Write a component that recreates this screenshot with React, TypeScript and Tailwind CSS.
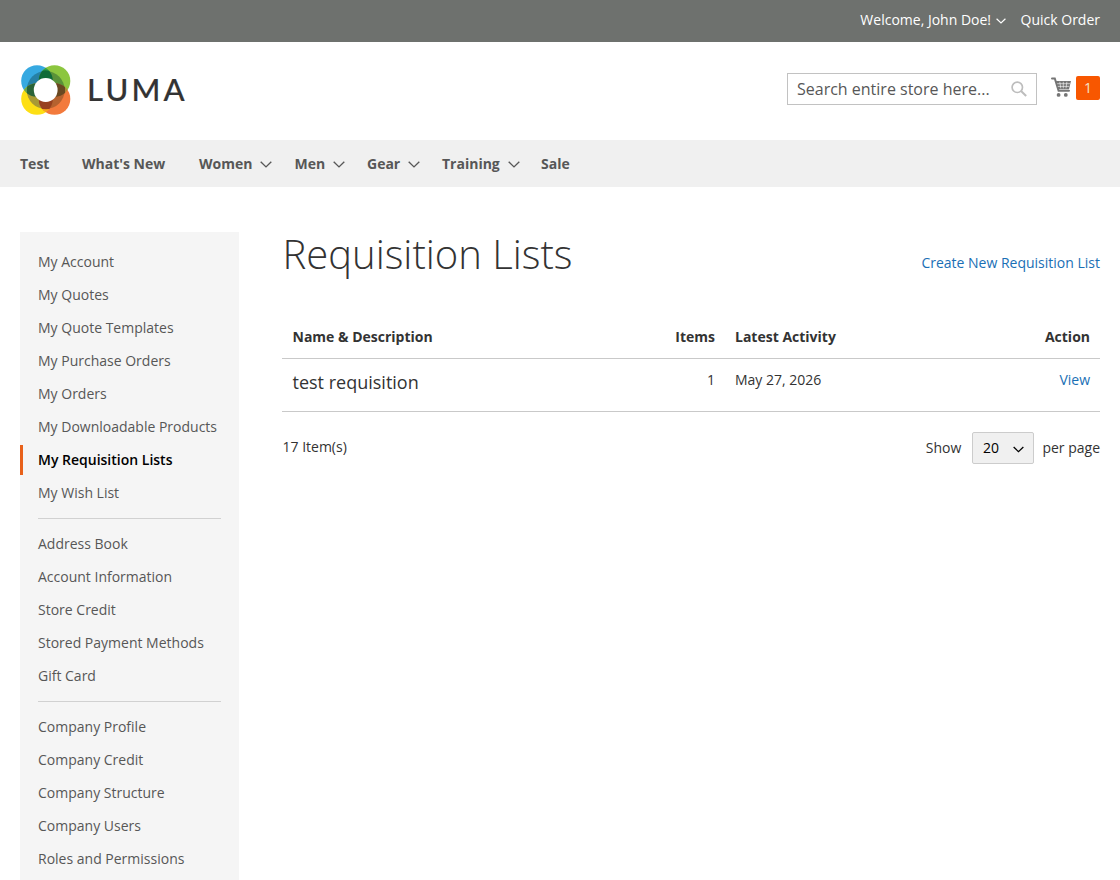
const navItems = [
  { label: "Test", hasMenu: false, width: "w-[62px]" },
  { label: "What's New", hasMenu: false, width: "w-[117px]" },
  { label: "Women", hasMenu: true, width: "w-[95.5px]" },
  { label: "Men", hasMenu: true, width: "w-[72.5px]" },
  { label: "Gear", hasMenu: true, width: "w-[75px]" },
  { label: "Training", hasMenu: true, width: "w-[99px]" },
  { label: "Sale", hasMenu: false, width: "w-[40px]" },
];

const sidebarGroups = [
  [
    "My Account",
    "My Quotes",
    "My Quote Templates",
    "My Purchase Orders",
    "My Orders",
    "My Downloadable Products",
    "My Requisition Lists",
    "My Wish List",
  ],
  [
    "Address Book",
    "Account Information",
    "Store Credit",
    "Stored Payment Methods",
    "Gift Card",
  ],
  [
    "Company Profile",
    "Company Credit",
    "Company Structure",
    "Company Users",
    "Roles and Permissions",
  ],
];

function Chevron({ className }: { className: string }) {
  return (
    <svg viewBox="0 0 12 7" className={className} fill="none">
      <path d="M.7.8 6 5.9 11.3.8" stroke="currentColor" strokeWidth="1.4" />
    </svg>
  );
}

function Logo() {
  return (
    <a href="#" className="flex items-center">
      <svg width="50" height="50" viewBox="0 0 50 50">
        <defs>
          <clipPath id="tl">
            <circle cx="16" cy="16" r="15.8" />
          </clipPath>
          <clipPath id="tr">
            <circle cx="33.5" cy="16" r="15.8" />
          </clipPath>
          <clipPath id="bl">
            <circle cx="16" cy="34" r="15.8" />
          </clipPath>
          <clipPath id="br">
            <circle cx="33.5" cy="34" r="15.8" />
          </clipPath>
        </defs>
        <circle cx="16" cy="16" r="15.8" fill="#36a9e1" />
        <circle cx="33.5" cy="16" r="15.8" fill="#8cc63f" />
        <circle cx="16" cy="34" r="15.8" fill="#fddf14" />
        <circle cx="33.5" cy="34" r="15.8" fill="#f37a3c" />
        <circle cx="33.5" cy="16" r="15.8" fill="#35a04a" clipPath="url(#tl)" />
        <circle cx="33.5" cy="34" r="15.8" fill="#f8a51b" clipPath="url(#bl)" />
        <circle cx="16" cy="34" r="15.8" fill="#6aa843" clipPath="url(#tl)" />
        <circle cx="33.5" cy="34" r="15.8" fill="#ae8a35" clipPath="url(#tr)" />
        {/* inner ring, one shade per quadrant */}
        <circle cx="24.7" cy="25" r="19" fill="#2680a5" clipPath="url(#tl)" />
        <circle cx="24.7" cy="25" r="19" fill="#5a9239" clipPath="url(#tr)" />
        <circle cx="24.7" cy="25" r="19" fill="#a89a35" clipPath="url(#bl)" />
        <circle cx="24.7" cy="25" r="19" fill="#b5622f" clipPath="url(#br)" />
        <g clipPath="url(#tl)">
          <path d="M17 6.9A19 19 0 0 1 32 7V25H17z" fill="#0f6b38" clipPath="url(#tr)" />
          <path d="M6 18H25V32H6z" fill="#2a6438" clipPath="url(#bl)" />
        </g>
        <g clipPath="url(#br)">
          <path d="M25 18H44V32H25z" fill="#694821" clipPath="url(#tr)" />
          <path d="M18 25H32V43.3Q25 45 18 43.3z" fill="#97401f" clipPath="url(#bl)" />
        </g>
        <circle cx="24.7" cy="25" r="11.9" fill="#fff" />
      </svg>
      <span className="-mt-[3px] ml-[16px] font-['Lato',sans-serif] text-[31px] leading-[50px] font-medium tracking-[3.2px] text-[#333] [-webkit-text-stroke:0.2px_#333]">
        LUMA
      </span>
    </a>
  );
}

function CartIcon() {
  return (
    <svg width="20" height="20" viewBox="0 0 20 20" fill="#757575">
      <path
        d="M1 1.5h2.8L7.6 13.7H18"
        fill="none"
        stroke="#757575"
        strokeWidth="2"
        strokeLinecap="round"
      />
      <path d="M4.6 4H20l-2 8.2H7z" />
      <path
        d="M6.2 6.7H19M6.8 9.4H18.3M8.8 4.8l1 6.6M12.3 4.8v6.6M15.9 4.8l-.9 6.6"
        stroke="#fff"
        strokeWidth="0.6"
      />
      <circle cx="7.6" cy="17.9" r="1.9" />
      <circle cx="14.8" cy="17.9" r="1.9" />
    </svg>
  );
}

function Header() {
  return (
    <header>
      <div className="flex h-[42px] justify-end bg-[#6e716e] pr-5 text-sm leading-10 text-white">
        <span>Welcome, John Doe!</span>
        <Chevron className="mt-[18px] mr-[15px] ml-[4.5px] h-[6px] w-[10px]" />
        <a href="#">Quick Order</a>
      </div>
      <div className="flex h-[98px] items-start justify-between pr-5 pl-[21px]">
        <div className="pt-[23px]">
          <Logo />
        </div>
        <div className="flex items-start pt-[31px]">
          <div className="flex h-8 w-[250px] items-center justify-between border border-[#c2c2c2] pr-[9px] pl-[9px]">
            <span className="text-base leading-[22px] text-[#575757]">Search entire store here...</span>
            <svg width="16" height="16" viewBox="0 0 16 16" fill="none" stroke="#bdbdbd" strokeWidth="1.7">
              <circle cx="6.3" cy="6.3" r="5.2" />
              <path d="m10 10 5.2 5" strokeWidth="2" />
            </svg>
          </div>
          <div className="ml-[14px] flex pt-[3px]">
            <div className="pt-[1px]">
              <CartIcon />
            </div>
            <span className="ml-[5px] h-6 w-6 rounded-xs bg-[#f85700] text-center text-sm leading-6 text-[#f3e3c8]">
              1
            </span>
          </div>
        </div>
      </div>
      <nav className="flex h-[47px] bg-[#f0f0f0] pl-5 text-sm leading-[47px] font-bold text-[#575757]">
        {navItems.map((item) => (
          <a key={item.label} href="#" className={`flex items-center ${item.width}`}>
            {item.label}
            {item.hasMenu && <Chevron className="mt-[2px] ml-[8px] h-[7px] w-[12px]" />}
          </a>
        ))}
      </nav>
    </header>
  );
}

function Sidebar() {
  return (
    <aside className="w-[219px] shrink-0 bg-[#f5f5f5] pt-[15px] text-sm text-[#575757]">
      {sidebarGroups.map((group, i) => (
        <div key={group[0]}>
          {i > 0 && <hr className="mx-[18px] mt-[10px] mb-[10px] border-[#d1d1d1]" />}
          <ul>
            {group.map((label) => (
              <li key={label} className="mb-[3px] h-[30px] leading-[30px]">
                {label === "My Requisition Lists" ? (
                  <strong className="block border-l-[3px] border-[#e8611a] pl-[15px] font-semibold text-black">
                    {label}
                  </strong>
                ) : (
                  <a href="#" className="block pl-[18px]">
                    {label}
                  </a>
                )}
              </li>
            ))}
          </ul>
        </div>
      ))}
    </aside>
  );
}

function RequisitionLists() {
  return (
    <main className="ml-[43px] grow text-sm text-[#333]">
      <div className="flex h-[85px] justify-between">
        <h1 className="pl-[0.5px] text-[40px] leading-[44px] font-light">Requisition Lists</h1>
        <a href="#" className="pt-[21px] leading-5 text-[#1a6fb5]">
          Create New Requisition List
        </a>
      </div>
      <table className="w-full table-fixed border-collapse">
        <thead>
          <tr className="h-[41px] border-b border-[#c9c9c9] align-top">
            <th className="w-[353px] pt-[10px] pl-[10.5px] text-left leading-5 font-bold">Name &amp; Description</th>
            <th className="pt-[10px] pr-[10px] text-right leading-5 font-bold">Items</th>
            <th className="w-[285px] pt-[10px] pl-[10px] text-left leading-5 font-bold">Latest Activity</th>
            <th className="w-[90px] pt-[10px] pr-[10px] text-right leading-5 font-bold">Action</th>
          </tr>
        </thead>
        <tbody>
          <tr className="h-[53px] border-b border-[#c9c9c9] align-top">
            <td className="pt-[11px] pl-[10.5px] text-lg leading-[25px]">test requisition</td>
            <td className="pt-[11px] pr-[10px] text-right leading-5">1</td>
            <td className="pt-[11px] pl-[10px] leading-5">May 27, 2026</td>
            <td className="pt-[11px] pr-[10px] text-right leading-5 text-[#1a6fb5]">
              <a href="#">View</a>
            </td>
          </tr>
        </tbody>
      </table>
      <div className="mt-5 flex justify-between leading-8">
        <span className="pl-[0.5px] leading-[30px]">17 Item(s)</span>
        <div className="flex">
          <span>Show</span>
          <button
            type="button"
            className="mr-[8px] ml-[11px] flex h-8 w-[62px] items-center justify-between rounded-xs border border-[#ccc] bg-[#f0f0f0] pr-[9px] pl-[9.5px] text-black"
          >
            20
            <Chevron className="mt-[3px] h-[7px] w-[11px]" />
          </button>
          <span>per page</span>
        </div>
      </div>
    </main>
  );
}

export default function App() {
  return (
    <div className="flex h-[880px] flex-col overflow-hidden bg-white font-['Open_Sans','Noto_Sans',sans-serif]">
      <Header />
      <div className="flex grow px-5 pt-[45px]">
        <Sidebar />
        <RequisitionLists />
      </div>
    </div>
  );
}
